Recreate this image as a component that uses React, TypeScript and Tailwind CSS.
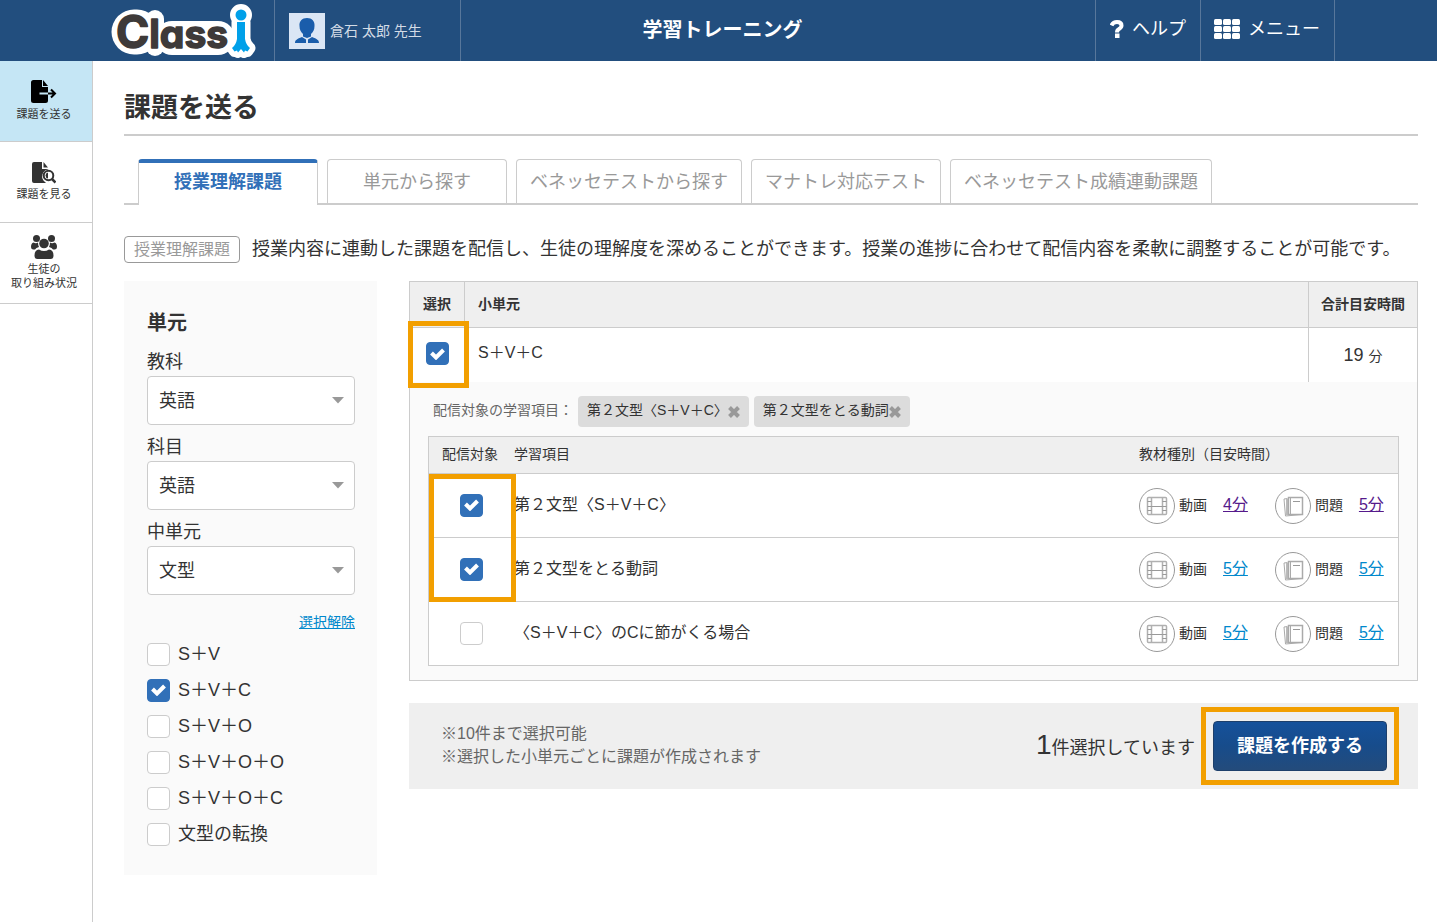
import { useId, type ReactNode } from "react";

const TABS = [
  "授業理解課題",
  "単元から探す",
  "ベネッセテストから探す",
  "マナトレ対応テスト",
  "ベネッセテスト成績連動課題",
];

const FILTERS = [
  { label: "教科", value: "英語" },
  { label: "科目", value: "英語" },
  { label: "中単元", value: "文型" },
];

const UNITS = [
  { label: "S＋V", checked: false },
  { label: "S＋V＋C", checked: true },
  { label: "S＋V＋O", checked: false },
  { label: "S＋V＋O＋O", checked: false },
  { label: "S＋V＋O＋C", checked: false },
  { label: "文型の転換", checked: false },
];

type Item = { name: string; checked: boolean; video: string; quiz: string; visited: boolean };

const ITEMS: Item[] = [
  { name: "第２文型〈S＋V＋C〉", checked: true, video: "4分", quiz: "5分", visited: true },
  { name: "第２文型をとる動詞", checked: true, video: "5分", quiz: "5分", visited: false },
  { name: "〈S＋V＋C〉のCに節がくる場合", checked: false, video: "5分", quiz: "5分", visited: false },
];

const PERSON = "M127 21h8v17q1 6 5 9l-2.500 3.500-2.500-1-1 2-3-3.500-3 3.500-1-2-2.500 1L122 47q4-3 5-9z";

function Logo() {
  return (
    <svg width="148" height="60" viewBox="0 0 148 60" role="img" aria-label="Classi">
      <g fill="#fff" stroke="#fff" strokeWidth="11" strokeLinejoin="round" strokeLinecap="round">
        <path fill="none" strokeWidth="45" d="M24 31h3" />
        <path fill="none" strokeWidth="34" d="M62 37h46" />
        <path fill="none" d="M45 18v28" strokeWidth="18" />
        <path d={PERSON} />
        <circle cx="131" cy="14" r="5.500" />
      </g>
      <text
        x="6"
        y="47"
        fill="#3e3a39"
        stroke="#3e3a39"
        strokeWidth="1.500"
        strokeLinejoin="round"
        fontFamily="Inter, sans-serif"
        fontWeight="700"
        style={{ fontFeatureSettings: '"cv11"' }}
      >
        <tspan fontSize="45">C</tspan>
        <tspan fontSize="39">lass</tspan>
      </text>
      <g fill="#00a0e9">
        <circle cx="131" cy="14" r="5.500" />
        <path d={PERSON} />
      </g>
    </svg>
  );
}

function Avatar() {
  return (
    <svg width="36" height="36" viewBox="0 0 36 36" aria-hidden="true">
      <path fill="#dbe6f5" d="M0 0h36v36H0z" />
      <path
        fill="#1a5dab"
        d="M18 5c5 0 8 3.500 7.500 8 0 4-1.500 6-3.500 8v2.500l-4 1.500-4-1.500V21c-2-2-3.500-4-3.500-8C10 8.500 13 5 18 5zM13 24l4 2.500V30H6c0-3 2-4 7-6zM23 24l-4 2.500V30h11c0-3-2-4-7-6z"
      />
    </svg>
  );
}

function HelpIcon() {
  return (
    <svg width="14" height="18" viewBox="0 0 14 18" aria-hidden="true">
      <path fill="none" stroke="#fff" strokeWidth="4" d="M1.500 5.500Q3 2 7 2q4.500 0 4.500 3.500 0 2-2.500 3.500-2 1-2 3.500" />
      <path fill="#fff" d="M5 13.500h4.500V18H5z" />
    </svg>
  );
}

function GridIcon() {
  return (
    <svg width="26" height="20" viewBox="0 0 26 20" fill="#fff" aria-hidden="true">
      {[0, 7, 14].map((y) =>
        [0, 9, 18].map((x) => <rect key={`${x}-${y}`} x={x} y={y} width="8" height="6" rx="1.500" />)
      )}
    </svg>
  );
}

function SendIcon() {
  return (
    <svg width="26" height="24" viewBox="0 0 26 24" aria-hidden="true">
      <path fill="#000" d="M2.500 0H11v7h6v5.500H8.500v2H17v6q0 2.500-2.500 2.500h-12Q0 23 0 20.500v-18Q0 0 2.500 0z" />
      <path fill="#000" d="M12 0l5 6h-5z" />
      <path fill="none" stroke="#000" strokeWidth="2" d="M17 13.500h7M20 9.500l4 4-4 4" />
    </svg>
  );
}

function ViewIcon() {
  return (
    <svg width="24" height="22" viewBox="0 0 24 22" aria-hidden="true">
      <path fill="#333" d="M2 0h8v7h6v.500a7 7 0 0 0-3 12.500l1 1H2q-2 0-2-2V2q0-2 2-2z" />
      <path fill="#333" d="M11.500 0L16 5.500h-4.500z" />
      <circle cx="16.500" cy="13.500" r="4.800" fill="#fff" stroke="#333" strokeWidth="2" />
      <path fill="#333" d="M16 10.500v6q-2.500-.5-2.500-3t2.500-3z" />
      <path stroke="#333" strokeWidth="2.500" d="M20 17l3.500 3.500" />
    </svg>
  );
}

function StudentsIcon() {
  return (
    <svg width="26" height="24" viewBox="0 0 26 24" fill="#333" aria-hidden="true">
      <circle cx="5.500" cy="3.500" r="3.500" />
      <circle cx="20.500" cy="3.500" r="3.500" />
      <path d="M2.500 7.500q2.500 1.500 4.500 0 0 3 1 4.500-3 .5-4 2.500H2Q0 14 0 12q0-4 2.500-4.500zM23.500 7.500q-2.500 1.500-4.500 0 0 3-1 4.500 3 .5 4 2.500h2q2-.5 2-2.500 0-4-2.500-4.500z" />
      <circle cx="13" cy="8.500" r="4.800" />
      <path d="M8 14.500q5 3 10 0 4.500.500 4.500 6 0 3.500-3 3.500h-13q-3 0-3-3.500 0-5.500 4.500-6z" />
    </svg>
  );
}

function VideoIcon() {
  return (
    <svg width="36" height="36" viewBox="0 0 36 36" fill="none" stroke="#999" aria-hidden="true">
      <circle cx="18" cy="18" r="17.500" fill="#fff" />
      <g stroke="#b0b0b0">
        <path strokeWidth="1.500" d="M9.500 9.500h17q1 0 1 1v15q0 1-1 1h-17q-1 0-1-1v-15q0-1 1-1z" />
        <path d="M12.500 9.500v17M23.500 9.500v17" strokeWidth="1.500" />
        <path d="M12.500 18.500h11M8.500 13.500h4M8.500 18.500h4M8.500 22.500h4M23.500 13.500h4M23.500 18.500h4M23.500 22.500h4" stroke="#999" />
      </g>
    </svg>
  );
}

function QuizIcon() {
  return (
    <svg width="36" height="36" viewBox="0 0 36 36" fill="none" stroke="#999" aria-hidden="true">
      <circle cx="18" cy="18" r="17.500" fill="#fff" />
      <path d="M12.500 10.500l-3.500.5 1.500 17 16.500-1.500" stroke="#aaa" />
      <path d="M12 11v16" strokeWidth="2" stroke="#bbb" />
      <path d="M13.500 9.500h14v17h-14z" stroke="#aaa" strokeWidth="1.500" />
      <path d="M15.500 9.500v17" stroke="#aaa" />
      <path d="M18 13.500h7" />
    </svg>
  );
}

function Checkbox({ checked, label, id }: { checked: boolean; label?: string; id?: string }) {
  return (
    <span className="relative inline-grid size-[23px] shrink-0 place-items-center align-middle">
      <input
        type="checkbox"
        id={id}
        aria-label={label}
        defaultChecked={checked}
        className="peer size-full appearance-none rounded border border-[#ccc] bg-white checked:border-[#3170b8] checked:bg-[#3170b8]"
      />
      <svg
        className="pointer-events-none absolute hidden peer-checked:block"
        width="15"
        height="12"
        viewBox="0 0 15 12"
        aria-hidden="true"
      >
        <path fill="none" stroke="#fff" strokeWidth="4" d="M1.500 5l4.500 4.500L13.500 2" />
      </svg>
    </span>
  );
}

function SideLink({ icon, active, children }: { icon: ReactNode; active?: boolean; children: ReactNode }) {
  return (
    <a
      href="#"
      className={`flex h-[81px] flex-col items-center justify-center gap-[3px] border-b border-[#ccc] pb-0.5 pr-1 text-center text-[11px] leading-[14px] ${
        active ? "bg-[#c5e6f5]" : "bg-white"
      }`}
    >
      {icon}
      <span>{children}</span>
    </a>
  );
}

function Filter({ label, value }: { label: string; value: string }) {
  const id = useId();
  return (
    <div className="mb-2">
      <label htmlFor={id} className="block text-lg leading-7">
        {label}
      </label>
      <div className="relative">
        <select
          id={id}
          className="block h-[49px] w-full appearance-none rounded border border-[#ccc] bg-white px-[11px] text-lg"
        >
          <option>{value}</option>
        </select>
        <svg className="pointer-events-none absolute right-[11px] top-[21px]" width="12" height="7" viewBox="0 0 12 7">
          <path fill="#999" d="M0 0h12L6 6.500z" />
        </svg>
      </div>
    </div>
  );
}

function UnitOption({ label, checked }: { label: string; checked: boolean }) {
  const id = useId();
  return (
    <li className="flex h-9 items-center gap-2">
      <Checkbox id={id} checked={checked} />
      <label htmlFor={id} className="text-lg leading-6">
        {label}
      </label>
    </li>
  );
}

function Tag({ children }: { children: string }) {
  return (
    <span className="flex h-[31px] items-center rounded-sm bg-[#dcdcdc] px-[9px] text-sm">
      <span className="pb-1">{children}</span>
      <button type="button" aria-label={`${children}を外す`}>
        <svg width="12" height="12" viewBox="0 0 12 12" aria-hidden="true">
          <path stroke="#999" strokeWidth="4" d="M1.500 1.500l9 9M10.500 1.500l-9 9" />
        </svg>
      </button>
    </span>
  );
}

function Material({ icon, name, time, visited }: { icon: ReactNode; name: string; time: string; visited: boolean }) {
  return (
    <span className="flex items-center">
      {icon}
      <span className="ml-1 pb-0.5 text-sm">{name}</span>
      <a href="#" className={`ml-4 pb-0.5 text-base underline ${visited ? "text-[#551a8b]" : "text-[#0088cc]"}`}>
        {time}
      </a>
    </span>
  );
}

// Orange frame that points at the control to press
function Highlight({ className }: { className: string }) {
  return <span className={`pointer-events-none absolute z-10 border-[5px] border-[#f29f00] ${className}`} />;
}

export default function App() {
  return (
    <div className="flex min-h-screen flex-col bg-white font-['Liberation_Sans','Noto_Sans_CJK_JP',sans-serif] text-[#333]">
      <header className="grid h-[61px] grid-cols-[1fr_auto_1fr] bg-[#224e7e] pl-[110px] pr-[102px] text-white">
        <div className="flex">
          <a href="#" className="flex w-[165px] items-center border-r border-[#58779b]">
            <Logo />
          </a>
          <div className="flex w-[186px] items-center gap-[5px] border-r border-[#58779b] pl-3.5 text-sm text-[#d3dce6]">
            <Avatar />
            <span>倉石 太郎 先生</span>
          </div>
        </div>
        <p className="self-center pb-0.5 text-xl font-bold">学習トレーニング</p>
        <nav className="flex justify-end text-lg">
          <a href="#" className="flex w-[106px] items-center gap-2 border-x border-[#58779b] pb-1 pl-3.5">
            <HelpIcon />
            <span className="whitespace-nowrap">ヘルプ</span>
          </a>
          <a href="#" className="flex w-[134px] items-center gap-2 border-r border-[#58779b] pb-1 pl-[13px]">
            <GridIcon />
            <span className="whitespace-nowrap">メニュー</span>
          </a>
        </nav>
      </header>

      <div className="flex flex-1">
        <nav className="w-[93px] shrink-0 border-r border-[#ccc]">
          <SideLink active icon={<SendIcon />}>課題を送る</SideLink>
          <SideLink icon={<ViewIcon />}>課題を見る</SideLink>
          <SideLink icon={<StudentsIcon />}>
            生徒の
            <br />
            取り組み状況
          </SideLink>
        </nav>

        <main className="min-w-0 flex-1 pb-12 pl-[31px] pr-[19px] pt-[29px]">
          <h1 className="border-b-2 border-[#ccc] pb-2 text-[27px] font-bold leading-9">課題を送る</h1>

          <div role="tablist" className="mt-[23px] flex h-[46px] gap-[9px] border-b-2 border-[#ccc] pl-3.5 text-lg">
            {TABS.map((tab, i) => (
              <button
                key={tab}
                type="button"
                role="tab"
                aria-selected={i === 0}
                className={`min-w-[180px] whitespace-nowrap rounded-t border-x px-[13px] ${
                  i === 0
                    ? "h-[46px] border-t-4 border-x-[#ccc] border-t-[#3170b8] bg-white pb-1 font-bold text-[#3170b8]"
                    : "h-11 border-t border-[#ccc] text-[#999]"
                }`}
              >
                {tab}
              </button>
            ))}
          </div>

          <div className="mt-[31px] flex items-center gap-3">
            <span className="shrink-0 rounded-sm border border-[#999] px-[9px] text-base leading-[25px] text-[#999]">
              授業理解課題
            </span>
            <p className="text-lg leading-[27px]">
              授業内容に連動した課題を配信し、生徒の理解度を深めることができます。授業の進捗に合わせて配信内容を柔軟に調整することが可能です。
            </p>
          </div>

          <div className="mt-[18px] flex items-start gap-8">
            <aside className="w-[253px] shrink-0 bg-[#fafafa] pb-[23px] pl-[23px] pr-[22px] pt-7">
              <h2 className="mb-[11px] text-xl font-bold leading-7">単元</h2>
              {FILTERS.map((f) => (
                <Filter key={f.label} label={f.label} value={f.value} />
              ))}
              <p className="mb-0.5 mt-[15px] text-right text-sm leading-6">
                <a href="#" className="text-[#0088cc] underline">選択解除</a>
              </p>
              <ul>
                {UNITS.map((u) => (
                  <UnitOption key={u.label} label={u.label} checked={u.checked} />
                ))}
              </ul>
            </aside>

            <div className="min-w-0 flex-1">
              <table className="w-full border-separate border-spacing-0 border border-[#ccc]">
                <thead className="bg-[#efefef] text-sm">
                  <tr className="h-[46px]">
                    <th className="w-[55px] border-b border-r border-[#ccc] pb-0.5">選択</th>
                    <th className="border-b border-[#ccc] pb-0.5 pl-[13px] text-left">小単元</th>
                    <th className="w-[109px] border-b border-l border-[#ccc] pb-0.5">合計目安時間</th>
                  </tr>
                </thead>
                <tbody>
                  <tr className="h-[54px]">
                    <td className="relative pb-1 text-center">
                      <Highlight className="-left-0.5 -top-[7px] h-[67px] w-[61px]" />
                      <Checkbox checked label="S＋V＋Cを選択" />
                    </td>
                    <td className="pb-1 pl-[13px] text-base">S＋V＋C</td>
                    <td className="border-l border-[#ccc] text-center text-lg">
                      19 <span className="text-sm">分</span>
                    </td>
                  </tr>
                  <tr>
                    <td colSpan={3} className="bg-[#fafafa] px-[18px] py-3.5">
                      <div className="mb-[9px] flex items-center gap-[5px] pl-[5px] text-sm">
                        <span className="pb-1 text-[#666]">配信対象の学習項目：</span>
                        <Tag>第２文型〈S＋V＋C〉</Tag>
                        <Tag>第２文型をとる動詞</Tag>
                      </div>
                      <table className="w-full border-separate border-spacing-0 border border-b-0 border-[#ccc] bg-white">
                        <thead className="bg-[#efefef] text-sm">
                          <tr className="h-[37px]">
                            <th className="w-[85px] border-b border-[#ccc] pb-0.5 pl-[13px] text-left font-normal">
                              配信対象
                            </th>
                            <th className="border-b border-[#ccc] pb-0.5 text-left font-normal">学習項目</th>
                            <th className="w-[259px] border-b border-[#ccc] pb-0.5 text-left font-normal">
                              教材種別（目安時間）
                            </th>
                          </tr>
                        </thead>
                        <tbody>
                          {ITEMS.map((item, i) => (
                            <tr key={item.name} className="h-16">
                              <td className="relative border-b border-[#ccc] pb-0.5 text-center">
                                {i === 0 && <Highlight className="left-0 top-0 h-32 w-[87px]" />}
                                <Checkbox checked={item.checked} label={item.name} />
                              </td>
                              <td className="border-b border-[#ccc] pb-0.5 text-base">{item.name}</td>
                              <td className="border-b border-[#ccc]">
                                <div className="flex gap-[27px]">
                                  <Material icon={<VideoIcon />} name="動画" time={item.video} visited={item.visited} />
                                  <Material icon={<QuizIcon />} name="問題" time={item.quiz} visited={item.visited} />
                                </div>
                              </td>
                            </tr>
                          ))}
                        </tbody>
                      </table>
                    </td>
                  </tr>
                </tbody>
              </table>

              <div className="mt-[22px] flex items-center justify-between bg-[#efefef] py-[18px] pl-8 pr-[31px]">
                <p className="pb-0.5 text-base leading-[23px] text-[#666]">
                  ※10件まで選択可能
                  <br />
                  ※選択した小単元ごとに課題が作成されます
                </p>
                <div className="flex items-center gap-[18px]">
                  <p className="text-lg leading-8">
                    <span className="text-[28px]">1</span>件選択しています
                  </p>
                  <div className="relative">
                    <button
                      type="button"
                      className="h-[50px] w-[174px] rounded border border-[#1d3f6b] bg-linear-to-b from-[#15519b] via-[#174c8b] to-[#234b7b] text-lg font-bold text-white"
                    >
                      課題を作成する
                    </button>
                    <Highlight className="-inset-x-3 -inset-y-3.5" />
                  </div>
                </div>
              </div>
            </div>
          </div>
        </main>
      </div>
    </div>
  );
}
